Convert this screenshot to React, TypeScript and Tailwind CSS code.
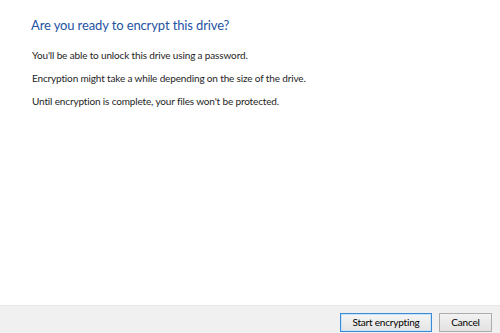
export default function App() {
  return (
    <div className="flex h-[333px] w-[500px] flex-col bg-white font-['Lato',sans-serif] text-[#1e1e1e]">
      {/* Содержимое */}
      <div className="flex-1 pl-[31px] pt-[13px]">
        <h1 className="text-[13px] leading-[24px] tracking-[-0.12px] text-[#2453a3]">Are you ready to encrypt this drive?</h1>
        <div className="mt-[11px] flex flex-col gap-[9px] pl-px text-[10px] leading-[14px] tracking-[-0.15px]">
          <p>You'll be able to unlock this drive using a password.</p>
          <p>Encryption might take a while depending on the size of the drive.</p>
          <p>Until encryption is complete, your files won't be protected.</p>
        </div>
      </div>

      {/* Кнопки */}
      <div className="flex h-[28px] justify-end gap-[7px] border-t border-[#e6e6e6] bg-[#f0f0f0] pr-[8px] pt-[7px]">
        <button className="h-[19px] w-[92px] border border-[#3c8bd6] bg-gradient-to-b from-[#f6f6f6] to-[#e4e4e4] text-[10px] leading-[17px] tracking-[-0.2px] text-black shadow-[inset_0_0_0_1px_#c8e2f8]">
          Start encrypting
        </button>
        <button className="h-[19px] w-[53px] border border-[#adadad] bg-gradient-to-b from-[#f2f2f2] to-[#e2e2e2] text-[10px] leading-[17px] tracking-[-0.2px] text-black">
          Cancel
        </button>
      </div>
    </div>
  )
}
